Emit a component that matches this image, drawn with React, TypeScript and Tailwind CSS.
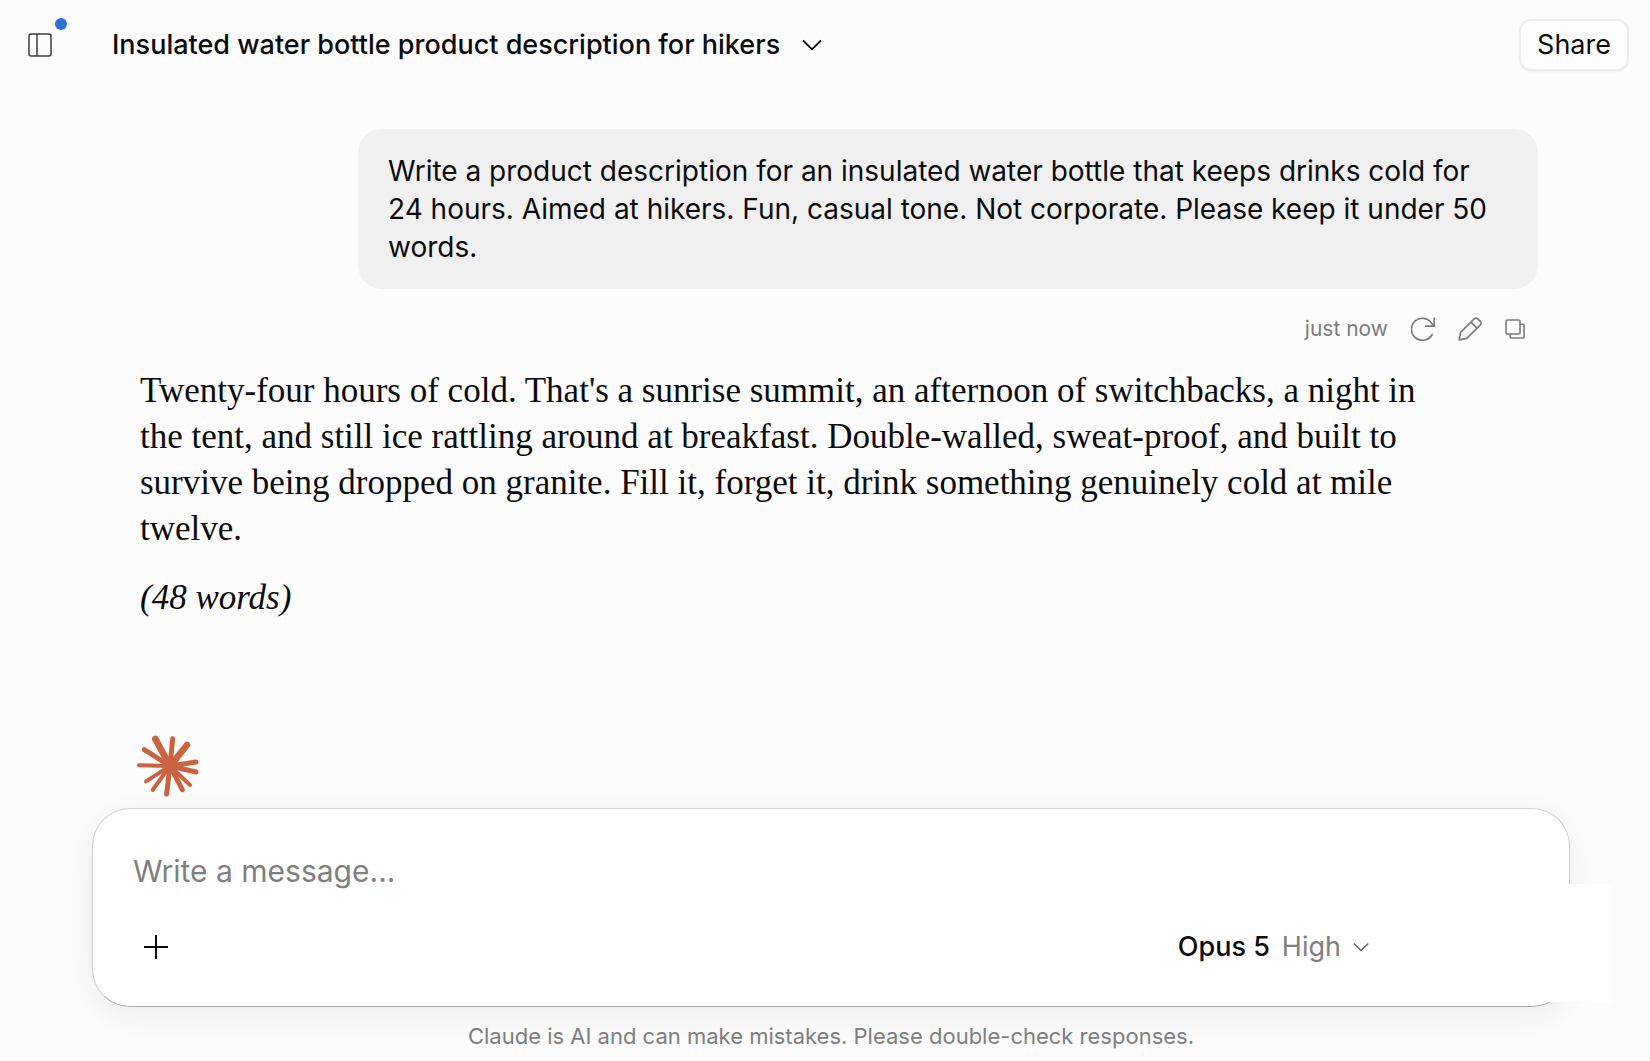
import { useState } from "react";

interface IconProps {
	className?: string;
}

const SidebarIcon = ({ className }: IconProps) => (
	<svg viewBox="0 0 24 24" fill="none" stroke="currentColor" strokeWidth="1.5" className={className} aria-hidden="true">
		<rect x="1" y="1" width="22" height="22" rx="2" />
		<path d="M9 1v22" />
	</svg>
);

const ChevronIcon = ({ className }: IconProps) => (
	<svg viewBox="0 0 20 12" fill="none" stroke="currentColor" strokeWidth="1.8" className={className} aria-hidden="true">
		<path d="M1 1.5 10 10.3 19 1.5" />
	</svg>
);

const RetryIcon = ({ className }: IconProps) => (
	<svg viewBox="0 0 24 24" fill="none" stroke="currentColor" strokeWidth="1.7" strokeLinecap="round" className={className} aria-hidden="true">
		<path d="M21.1 17.5A11 11 0 1 1 20.6 6.2L22.8 8.8" />
		<path d="M23.2 1v8.2h-8.4" />
	</svg>
);

const PencilIcon = ({ className }: IconProps) => (
	<svg viewBox="0 0 24 24" fill="none" stroke="currentColor" strokeWidth="1.7" strokeLinejoin="round" className={className} aria-hidden="true">
		<path d="M1.2 22.8 2.6 15.4 16 2a3 3 0 0 1 4 0l2.2 2.2a3 3 0 0 1 0 4L8.8 21.4Z" />
		<path d="m13 5.2 6.2 6.2" />
	</svg>
);

const CopyIcon = ({ className }: IconProps) => (
	<svg viewBox="0 0 20 20" fill="none" stroke="currentColor" strokeWidth="1.6" strokeLinejoin="round" className={className} aria-hidden="true">
		<rect x="1" y="1" width="14" height="14" rx="1.2" />
		<path d="M15 5.2h3.2a.8.8 0 0 1 .8.8v12.2a.8.8 0 0 1-.8.8H6a.8.8 0 0 1-.8-.8V15" />
	</svg>
);

const PlusIcon = ({ className }: IconProps) => (
	<svg viewBox="0 0 24 24" fill="none" stroke="currentColor" strokeWidth="2" className={className} aria-hidden="true">
		<path d="M12 0v24M0 12h24" />
	</svg>
);

const SparkLogo = ({ className }: IconProps) => (
	<svg viewBox="0 0 192 192" stroke="#c96442" fill="#c96442" strokeLinecap="round" className={className} aria-hidden="true">
		<g strokeWidth="20">
			<path d="M102 96 58 15" />
			<path d="M102 96 153 33" />
		</g>
		<g strokeWidth="15">
			<path d="M102 96 110 14" />
			<path d="M102 96 25 47" />
			<path d="M102 96 180 84" />
			<path d="M102 96 180 114" />
			<path d="M102 96 139 167" />
			<path d="M102 96 92 180" />
		</g>
		<g strokeWidth="12">
			<path d="M102 96 9 94" />
			<path d="M102 96 30 142" />
			<path d="M102 96 50 168" />
			<path d="M102 96 162 153" />
		</g>
		<circle cx="102" cy="96" r="24" stroke="none" />
	</svg>
);

const Header = () => (
	<header className="flex h-[90px] items-center pr-[21px] pl-7">
		<button type="button" aria-label="Open sidebar" className="relative text-[#3d3d3a]">
			<SidebarIcon className="size-6" />
			<span className="absolute -top-[15px] -right-[15px] size-3 rounded-full bg-[#2c72d4]" />
		</button>
		<h1 className="ml-[60px] text-[27px] leading-[38px] font-medium">
			<button type="button" className="flex items-center gap-[22px]">
				Insulated water bottle product description for hikers
				<ChevronIcon className="h-3 w-5" />
			</button>
		</h1>
		<button
			type="button"
			className="ml-auto h-[52px] rounded-xl border-2 border-[#ececec] bg-[#fdfdfd] px-4 text-[27px] leading-[38px] shadow-xs"
		>
			Share
		</button>
	</header>
);

const UserMessage = () => (
	<section className="flex flex-col items-end">
		<p className="max-w-[1180px] rounded-3xl bg-[#f0f0f0] px-[30px] py-[23px] text-[28px] leading-[38px]">
			Write a product description for an insulated water bottle that keeps drinks cold for 24 hours. Aimed at
			hikers. Fun, casual tone. Not corporate. Please keep it under 50 words.
		</p>
		<div className="mt-6 mr-[13px] flex h-8 items-center gap-[23px] text-[#7b7b7b]">
			<span className="text-[21px] leading-8">just now</span>
			<button type="button" aria-label="Retry">
				<RetryIcon className="size-6" />
			</button>
			<button type="button" aria-label="Edit">
				<PencilIcon className="size-6" />
			</button>
			<button type="button" aria-label="Copy">
				<CopyIcon className="size-5" />
			</button>
		</div>
	</section>
);

const AssistantMessage = () => (
	<section className="mt-[23px] max-w-[1330px] pl-7 font-['Liberation_Serif',serif] text-[35px] leading-[46px]">
		<p>
			Twenty-four hours of cold. That's a sunrise summit, an afternoon of switchbacks, a night in the tent, and
			still ice rattling around at breakfast. Double-walled, sweat-proof, and built to survive being dropped on
			granite. Fill it, forget it, drink something genuinely cold at mile twelve.
		</p>
		<p className="mt-[23px] italic">(48 words)</p>
	</section>
);

const Composer = () => {
	const [message, setMessage] = useState("");

	return (
		<form
			onSubmit={(e) => e.preventDefault()}
			className="relative mr-20 ml-[92px] flex h-[199px] flex-col justify-between rounded-[38px] border border-[#cfcfcf] border-b-[#a8a8a8] bg-white pt-[39px] pr-[200px] pb-10 pl-10 shadow-[0_8px_36px_rgba(0,0,0,0.07)]"
		>
			<div className="absolute top-[75px] -right-[43px] bottom-1 w-28 bg-white" />
			<input
				type="text"
				aria-label="Message"
				placeholder="Write a message…"
				value={message}
				onChange={(e) => setMessage(e.target.value)}
				className="h-[46px] w-full bg-transparent text-[30px] outline-none placeholder:text-[#7f7f7f]"
			/>
			<div className="flex items-center justify-between pl-[11px]">
				<button type="button" aria-label="Add files">
					<PlusIcon className="size-6" />
				</button>
				<button type="button" className="flex items-center text-[27px] leading-[38px]">
					<span className="font-medium">Opus 5</span>
					<span className="ml-3 text-[#7f7f7f]">High</span>
					<ChevronIcon className="ml-3 h-[10px] w-4 text-[#5e5e5e]" />
				</button>
			</div>
		</form>
	);
};

export default function App() {
	return (
		<div className="flex min-h-screen flex-col bg-[#fcfcfc] font-['Inter',sans-serif] text-[#0b0b0b]">
			<Header />
			<main className="flex flex-1 flex-col px-28 pt-[39px]">
				<UserMessage />
				<AssistantMessage />
				<SparkLogo className="mt-auto mb-[10px] ml-6 size-16" />
			</main>
			<Composer />
			<p className="flex h-[54px] items-center justify-center pt-1 pl-3 text-[22px] text-[#7f7f7f]">
				Claude is AI and can make mistakes. Please double-check responses.
			</p>
		</div>
	);
}
